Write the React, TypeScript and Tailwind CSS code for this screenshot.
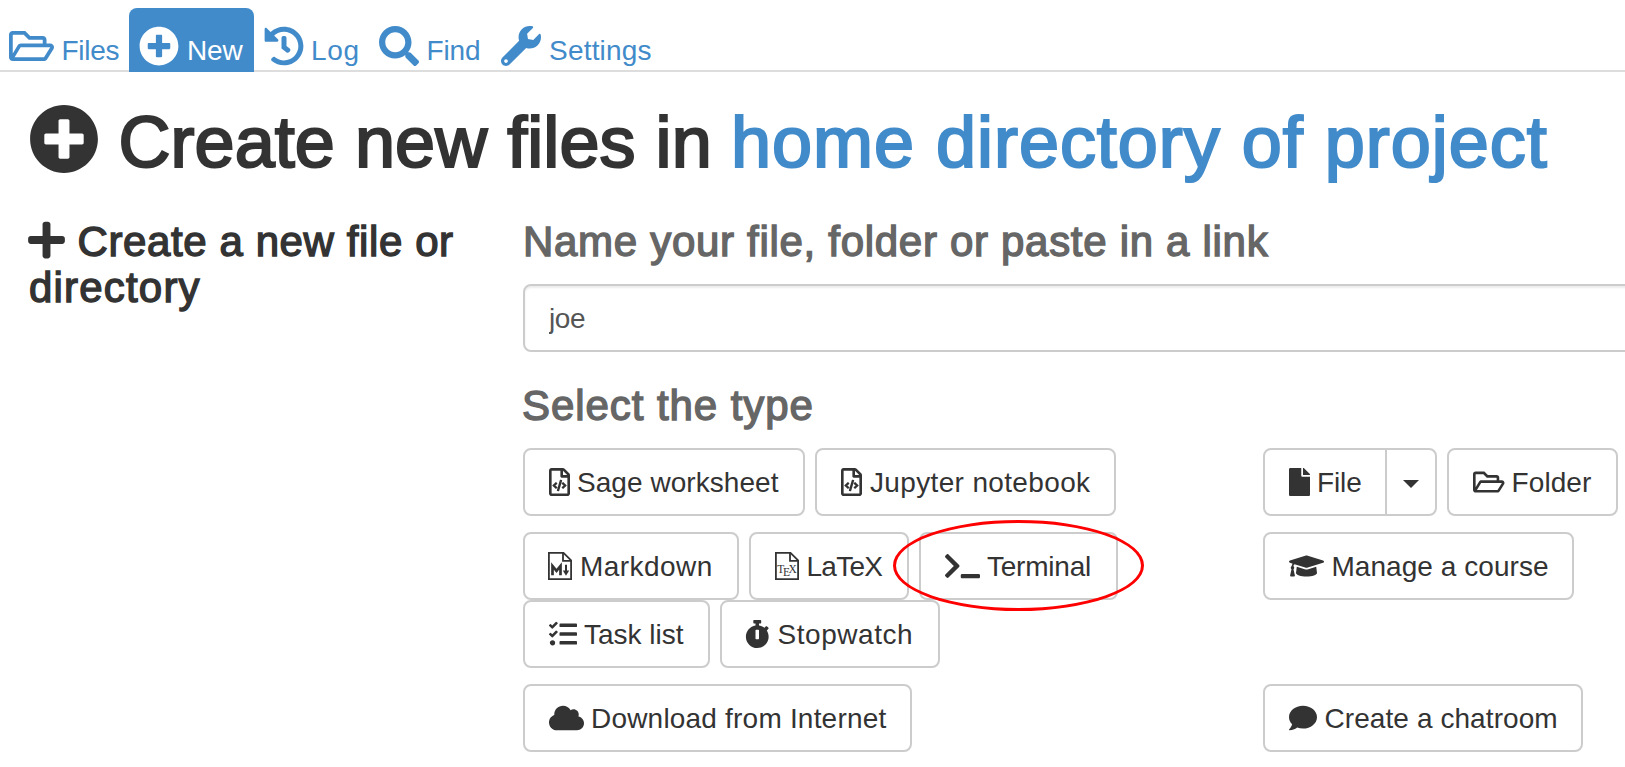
import React from 'react';
import {
  FaCloud,
  FaComment,
  FaFile,
  FaGraduationCap,
  FaHistory,
  FaPlus,
  FaPlusCircle,
  FaRegFileCode,
  FaRegFolderOpen,
  FaSearch,
  FaStopwatch,
  FaTasks,
  FaTerminal,
  FaWrench,
} from 'react-icons/fa';

function NavTab({ icon, label, className, labelClass, active }: {
  icon: React.ReactNode;
  label: string;
  className: string;
  labelClass: string;
  active?: boolean;
}) {
  return (
    <a
      className={`flex h-16 shrink-0 rounded-t-lg pt-[18px] whitespace-nowrap ${
        active ? 'bg-[#428bca] text-white' : 'text-[#428bca]'
      } ${className}`}
    >
      {icon}
      <span className={`pt-[5px] leading-10 ${labelClass}`}>{label}</span>
    </a>
  );
}

function Button({ icon, label, className, labelClass, children }: {
  icon: React.ReactNode;
  label: string;
  className: string;
  labelClass: string;
  children?: React.ReactNode;
}) {
  return (
    <button
      className={`flex h-[68px] shrink-0 items-center rounded-lg border-2 border-[#ccc] bg-white pl-6 whitespace-nowrap text-[#333] ${className}`}
    >
      {icon}
      <span className={`pt-0.5 leading-10 ${labelClass}`}>{label}</span>
      {children}
    </button>
  );
}

function PageOutline() {
  return (
    <>
      <path d="M.9 .9H15.5L23.1 8.3V27.1H.9Z" fill="none" stroke="currentColor" strokeWidth="1.8" />
      <path d="M15 1V8.8H23" fill="none" stroke="currentColor" strokeWidth="1.8" />
    </>
  );
}

function MarkdownIcon() {
  return (
    <svg viewBox="0 0 24 28" className="-ml-px h-7 w-6 shrink-0">
      <PageOutline />
      <path d="M4.5 23.2V14L8.5 18.8L12.5 14V23.2" fill="none" stroke="currentColor" strokeWidth="2.7" />
      <path d="M18 12.8V20" stroke="currentColor" strokeWidth="2" />
      <path d="M14.8 18.6H21.2L18 23.8Z" fill="currentColor" />
    </svg>
  );
}

function TexIcon() {
  return (
    <svg viewBox="0 0 24 28" className="h-7 w-6 shrink-0">
      <PageOutline />
      <g fill="currentColor" fontFamily="'Liberation Serif', serif" fontSize="11.5">
        <text x="2.2" y="21.2">T</text>
        <text x="8" y="23.8">E</text>
        <text x="13.4" y="21.2">X</text>
      </g>
    </svg>
  );
}

export default function App() {
  return (
    <div className="h-[767px] w-[1625px] overflow-hidden bg-white font-['Liberation_Sans',Arial,sans-serif] text-[28px] text-[#333]">
      <nav className="flex h-[72px] bg-[linear-gradient(#ddd,#ddd)] bg-[length:100%_2px] bg-bottom bg-no-repeat pt-2">
        <NavTab
          icon={<FaRegFolderOpen className="h-10 w-[45px]" />}
          label="Files"
          className="w-[129px] pl-[9px]"
          labelClass="ml-[7.5px] tracking-[-0.28px]"
        />
        <NavTab
          active
          icon={<FaPlusCircle className="size-10" />}
          label="New"
          className="w-[125px] pl-2.5"
          labelClass="ml-2 tracking-[-0.2px]"
        />
        <NavTab
          icon={<FaHistory className="size-10" />}
          label="Log"
          className="w-[115px] pl-2.5"
          labelClass="ml-[7px] tracking-[0.7px]"
        />
        <NavTab
          icon={<FaSearch className="size-10" />}
          label="Find"
          className="w-[122px] pl-2.5"
          labelClass="ml-[7.5px] tracking-[-0.1px]"
        />
        <NavTab
          icon={<FaWrench className="size-10" />}
          label="Settings"
          className="pl-2.5"
          labelClass="ml-2 tracking-[0.2px]"
        />
      </nav>

      <h1 className="mt-[31px] flex h-[79px] pl-[29px] text-[72px] leading-[79px] whitespace-nowrap [-webkit-text-stroke:2.2px_currentColor]">
        <FaPlusCircle className="mt-px size-[70px] shrink-0" stroke="none" />
        <span className="ml-[19.5px] w-[612.5px] shrink-0 tracking-[0.05px]">Create new files in</span>
        <a className="tracking-[0.97px] text-[#428bca]">home directory of project</a>
      </h1>

      <div className="flex pt-[37px]">
        <h3 className="w-[523px] shrink-0 pl-[29px] text-[42px] leading-[46px] [-webkit-text-stroke:1.4px_currentColor]">
          <div className="flex whitespace-nowrap">
            <FaPlus className="-ml-px h-[42px] w-[37px] shrink-0" stroke="none" />
            <span className="ml-[12.5px] tracking-[0.6px]">Create a new file or</span>
          </div>
          <div className="tracking-[1.19px]">directory</div>
        </h3>

        <div className="shrink-0">
          <h4 className="text-[42px] leading-[46px] tracking-[0.7px] text-[#666] whitespace-nowrap [-webkit-text-stroke:1.4px_currentColor]">
            Name your file, folder or paste in a link
          </h4>
          <input
            readOnly
            value="joe"
            className="mt-[19px] block h-[68px] w-[1130px] rounded-lg border-2 border-[#ccc] bg-white pt-0.5 pl-6 tracking-[-0.4px] text-[#555] shadow-[inset_0_2px_2px_rgba(0,0,0,0.075)] outline-none"
          />
          <h4 className="-ml-px mt-[31px] text-[42px] leading-[46px] tracking-[0.93px] text-[#666] [-webkit-text-stroke:1.4px_currentColor]">
            Select the type
          </h4>

          <div className="mt-[19px] grid grid-cols-[740px_auto] gap-y-4">
            <div className="flex gap-2.5">
              <Button
                icon={<FaRegFileCode className="h-7 w-[21px]" />}
                label="Sage worksheet"
                className="w-[282px]"
                labelClass="ml-[7px] tracking-[0.05px]"
              />
              <Button
                icon={<FaRegFileCode className="h-7 w-[21px]" />}
                label="Jupyter notebook"
                className="w-[301px]"
                labelClass="ml-2 tracking-[0.35px]"
              />
            </div>
            <div className="flex gap-2.5">
              <div className="flex">
                <Button
                  icon={<FaFile className="h-7 w-[21px]" />}
                  label="File"
                  className="w-[124px] rounded-r-none"
                  labelClass="ml-[7px] -tracking-[0.1px]"
                />
                <button className="-ml-0.5 flex h-[68px] w-[52px] items-center justify-center rounded-r-lg border-2 border-[#ccc] bg-white">
                  <svg viewBox="0 0 16 8" className="mt-[3px] h-2 w-4">
                    <path d="M0 0H16L8 8Z" fill="currentColor" />
                  </svg>
                </button>
              </div>
              <Button
                icon={<FaRegFolderOpen className="h-7 w-[31.5px]" />}
                label="Folder"
                className="w-[171px]"
                labelClass="ml-[7px] tracking-[0.1px]"
              />
            </div>

            <div className="flex flex-col">
              <div className="flex gap-2.5">
                <Button
                  icon={<MarkdownIcon />}
                  label="Markdown"
                  className="w-[216px]"
                  labelClass="ml-2 tracking-[0.45px]"
                />
                <Button
                  icon={<TexIcon />}
                  label="LaTeX"
                  className="w-[160px]"
                  labelClass="ml-[7.5px] tracking-[-0.75px]"
                />
                <Button
                  icon={<FaTerminal className="h-7 w-[35px]" />}
                  label="Terminal"
                  className="relative w-[199px]"
                  labelClass="ml-[7px] tracking-[-0.23px]"
                >
                  <span className="pointer-events-none absolute -top-[14px] -left-[28px] z-10 h-[91px] w-[251px] rounded-[50%] border-[3px] border-[#f00]" />
                </Button>
              </div>
              <div className="flex gap-2.5">
                <Button
                  icon={<FaTasks className="size-7" />}
                  label="Task list"
                  className="w-[187px]"
                  labelClass="ml-[7px]"
                />
                <Button
                  icon={<FaStopwatch className="-ml-px h-7 w-[24.5px]" />}
                  label="Stopwatch"
                  className="w-[220px]"
                  labelClass="ml-2 tracking-[0.55px]"
                />
              </div>
            </div>
            <div>
              <Button
                icon={<FaGraduationCap className="h-7 w-[35px]" />}
                label="Manage a course"
                className="w-[311px]"
                labelClass="ml-[7.5px] tracking-[0.05px]"
              />
            </div>

            <div>
              <Button
                icon={<FaCloud className="h-7 w-[35px]" />}
                label="Download from Internet"
                className="w-[389px]"
                labelClass="ml-[7px] tracking-[0.2px]"
              />
            </div>
            <div>
              <Button
                icon={<FaComment className="size-7" />}
                label="Create a chatroom"
                className="w-[320px]"
                labelClass="ml-[7.5px] tracking-[0.08px]"
              />
            </div>
          </div>
        </div>
      </div>
    </div>
  );
}
